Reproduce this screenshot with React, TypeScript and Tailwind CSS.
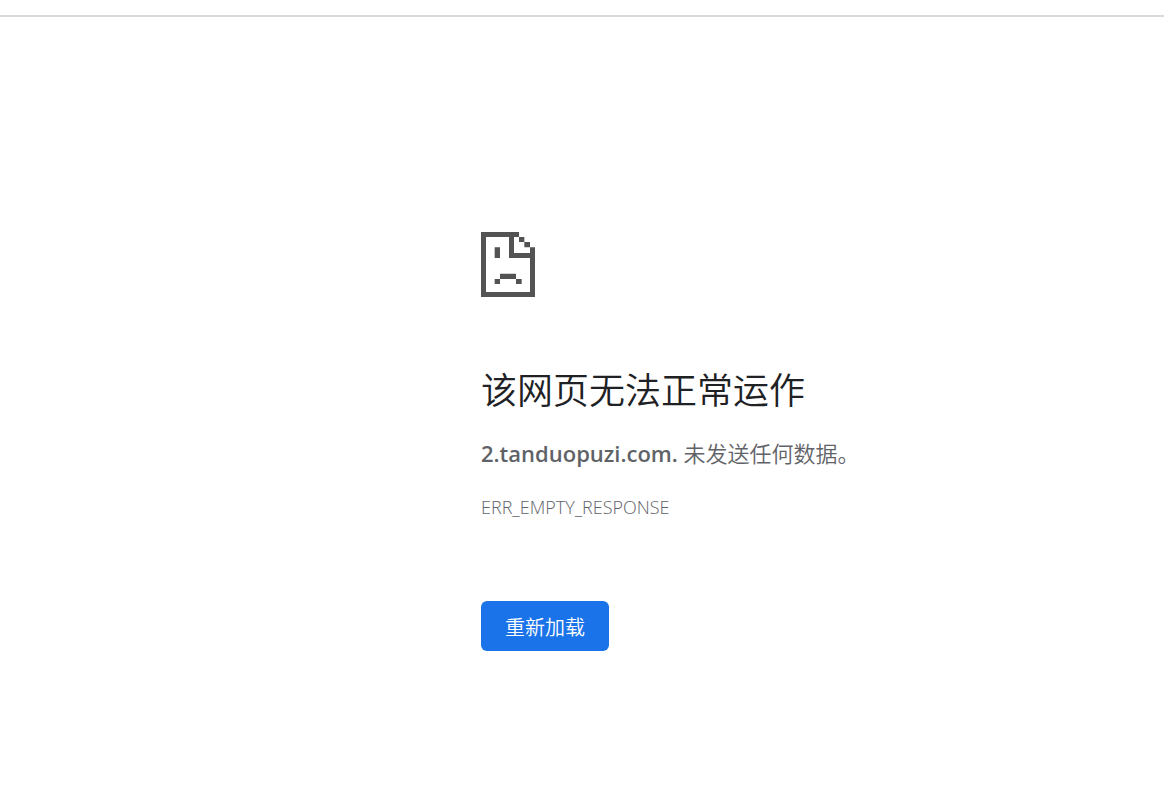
type ErrorPageProps = {
  host: string;
  code: string;
};

function SadPageIcon() {
  return (
    <svg viewBox="0 0 162 195" className="h-[65px] w-[54px] fill-[#535353]" aria-hidden="true">
      {/* page outline with the folded corner */}
      <path d="M0 0H114V15H99V63H147V78H84V15H15V180H147V78H147V46H162V195H0Z" />
      <path d="M114 15H130V30H114ZM130 30H147V46H130Z" />
      {/* face */}
      <path d="M41 46H57V78H41ZM57 125H105V141H57ZM41 141H57V156H41ZM105 141H122V156H105Z" />
    </svg>
  );
}

function ErrorPage({ host, code }: ErrorPageProps) {
  return (
    <main className="flex flex-col items-start pt-[215px] pr-6 pl-[481px] font-[350] text-[#5f6368]">
      <SadPageIcon />
      <h1 className="mt-[70px] text-[36px] leading-12 font-[350] text-[#202124]">该网页无法正常运作</h1>
      <p className="mt-[22px] text-[22px] leading-8">
        <strong className="font-semibold">{host}</strong> 未发送任何数据。
      </p>
      <p className="mt-[26px] text-[18px] leading-6">{code}</p>
      <button
        type="button"
        className="mt-[82px] h-[50px] rounded-md bg-[#1a73e8] px-6 pt-1 text-[20px] leading-6 text-white"
      >
        重新加载
      </button>
    </main>
  );
}

export default function App() {
  return (
    <div className="min-h-screen bg-white font-['Open_Sans','Noto_Sans_CJK_SC',sans-serif]" lang="zh-CN">
      <header className="h-[17px] border-b-2 border-[#dadada]" />
      <ErrorPage host="2.tanduopuzi.com." code="ERR_EMPTY_RESPONSE" />
    </div>
  );
}
